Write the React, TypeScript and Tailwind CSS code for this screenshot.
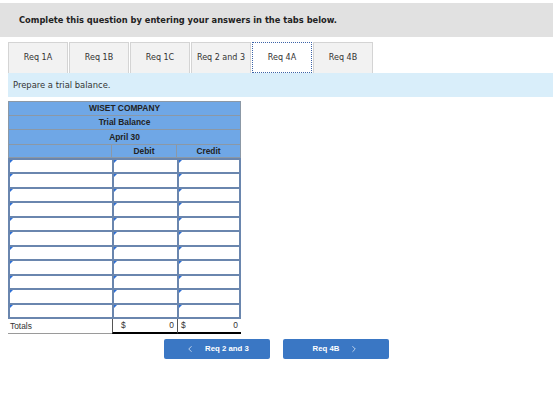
import { ChevronLeft, ChevronRight } from "lucide-react";

const TABS = ["Req 1A", "Req 1B", "Req 1C", "Req 2 and 3", "Req 4A", "Req 4B"];
const ACTIVE = "Req 4A";
const CELLS = Array.from({ length: 33 }, (_, i) => i);

export default function App() {
  return (
    <div className="w-[560px] h-[402px] bg-white pt-[3px] text-[#333]" style={{ fontFamily: '"DejaVu Sans", Verdana, sans-serif' }}>
      <div className="w-[553px] h-[34px] bg-[#e1e1e1] flex items-center pl-[19px]">
        <span className="text-[8.3px] font-bold text-[#222]">Complete this question by entering your answers in the tabs below.</span>
      </div>

      <div className="flex gap-[1px] pl-[8px] mt-[5px] h-[31px]">
        {TABS.map(t => (
          <div key={t} className={`w-[60px] flex items-center justify-center text-[8px] ${t === ACTIVE ? "bg-white border border-dotted border-[#3d64a8]" : "bg-[#f2f2f2] border border-[#d4d4d4] border-b-0"}`}>
            {t}
          </div>
        ))}
      </div>

      <div className="ml-[8px] w-[545px] h-[24px] bg-[#d9eefa] flex items-center pl-[5px]">
        <span className="text-[8.4px] text-[#333]">Prepare a trial balance.</span>
      </div>

      <div className="ml-[8px] mt-[4px] w-[233px]" style={{ fontFamily: '"Liberation Sans", Arial, sans-serif' }}>
        <div className="bg-[#6fa7e6] border border-[#8b98a6] text-[8.4px] font-bold text-[#222]">
          <div className="h-[14px] flex items-center justify-center border-b border-[#8b98a6]">WISET COMPANY</div>
          <div className="h-[14px] flex items-center justify-center border-b border-[#8b98a6]">Trial Balance</div>
          <div className="h-[15px] flex items-center justify-center border-b border-[#8b98a6]">April 30</div>
          <div className="h-[12px] grid grid-cols-[103px_65px_1fr]">
            <div className="border-r border-[#8b98a6]" />
            <div className="flex items-center justify-center border-r border-[#8b98a6]">Debit</div>
            <div className="flex items-center justify-center">Credit</div>
          </div>
        </div>

        <div className="grid grid-cols-[102px_63px_1fr] grid-rows-[repeat(11,1fr)] gap-[2px] p-[2px] h-[161px] bg-[#6a86ae]">
          {CELLS.map(c => (
            <div key={c} className="relative bg-white">
              <div className="absolute left-0 top-0 w-0 h-0 border-t-[3px] border-r-[3px] border-t-[#2d6fd6] border-r-transparent" />
            </div>
          ))}
        </div>

        <div className="grid grid-cols-[104px_65px_1fr] h-[14px] text-[8.4px] text-[#333]">
          <div className="flex items-center pl-[2px] border-b border-[#9a9a9a]">Totals</div>
          <div className="flex items-center justify-between pl-[8px] pr-[3px] border-l border-[#555] border-b-2 border-b-black">
            <span>$</span><span>0</span>
          </div>
          <div className="flex items-center justify-between px-[3px] border-l border-[#555] border-b-2 border-b-black">
            <span>$</span><span>0</span>
          </div>
        </div>
      </div>

      <div className="w-[553px] flex justify-center gap-[13px] mt-[6px]" style={{ fontFamily: '"Liberation Sans", Arial, sans-serif' }}>
        <div className="w-[106px] h-[20px] bg-[#3a77c4] rounded-[2px] flex items-center justify-center gap-[10px] text-white text-[7.8px] font-bold">
          <ChevronLeft size={10} strokeWidth={1.6} />
          <span>Req 2 and 3</span>
        </div>
        <div className="w-[106px] h-[20px] bg-[#3a77c4] rounded-[2px] flex items-center justify-center gap-[10px] text-white text-[7.8px] font-bold">
          <span>Req 4B</span>
          <ChevronRight size={10} strokeWidth={1.6} />
        </div>
      </div>
    </div>
  );
}
